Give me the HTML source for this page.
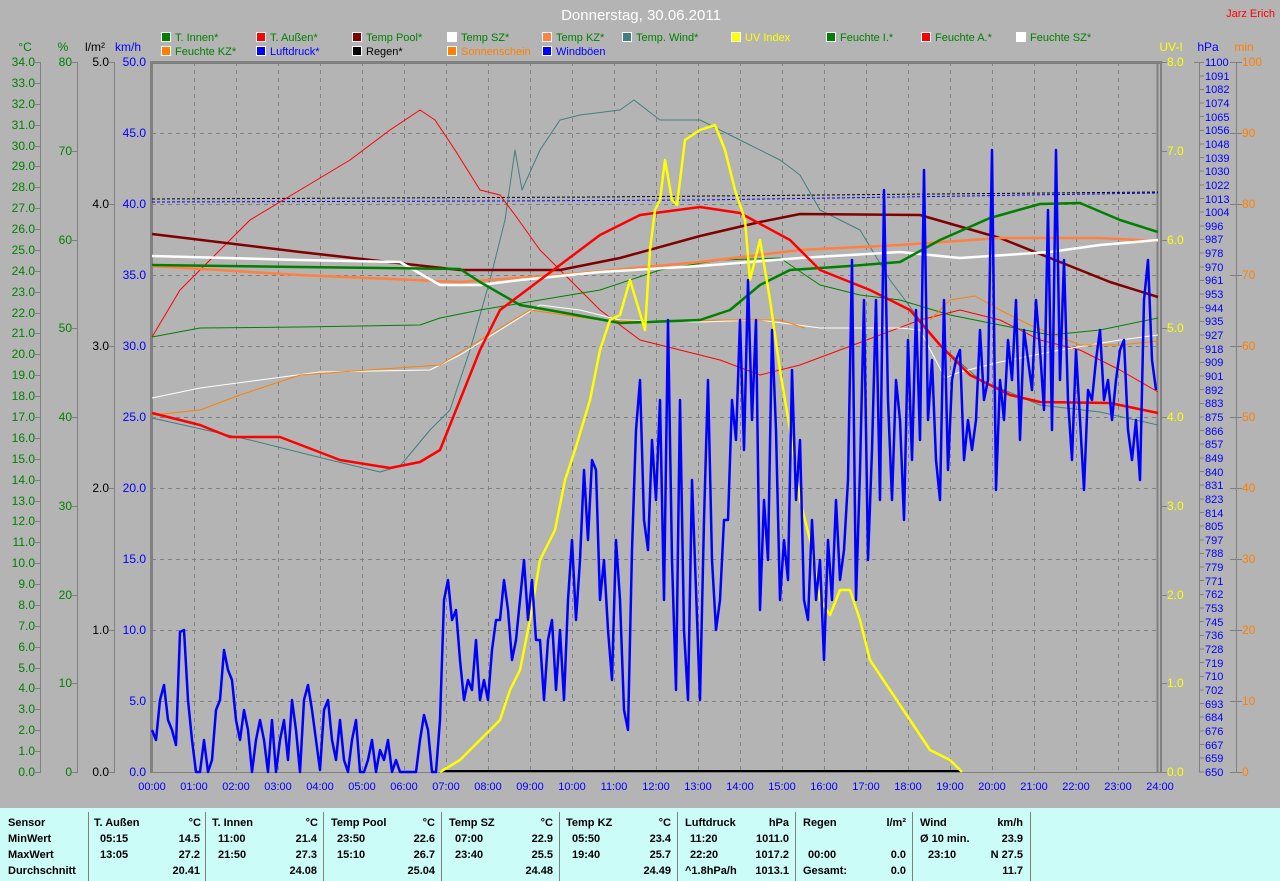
<!DOCTYPE html>
<html><head><meta charset="utf-8"><style>
html,body{margin:0;padding:0;background:#b4b4b4;width:1280px;height:881px;overflow:hidden}
svg{display:block;font-family:"Liberation Sans",sans-serif}
.tb{font-size:11px;font-weight:bold;fill:#000}
</style></head><body>
<svg width="1280" height="881" viewBox="0 0 1280 881" xmlns="http://www.w3.org/2000/svg">
<rect width="1280" height="881" fill="#b4b4b4"/>
<text x="641" y="20" font-size="15" fill="#fff" text-anchor="middle">Donnerstag, 30.06.2011</text>
<text x="1275" y="17" font-size="11" fill="#f00" text-anchor="end">Jarz Erich</text>
<!-- legend -->
<g font-size="11">
<g stroke="#fff" stroke-width="1">
<rect x="161.5" y="32.5" width="9" height="9" fill="#008000"/>
<rect x="256.5" y="32.5" width="9" height="9" fill="#f00"/>
<rect x="352.5" y="32.5" width="9" height="9" fill="#800000"/>
<rect x="447.5" y="32.5" width="9" height="9" fill="#fff"/>
<rect x="542.5" y="32.5" width="9" height="9" fill="#ff8040"/>
<rect x="622.5" y="32.5" width="9" height="9" fill="#408080"/>
<rect x="731.5" y="32.5" width="9" height="9" fill="#ff0"/>
<rect x="826.5" y="32.5" width="9" height="9" fill="#008000"/>
<rect x="921.5" y="32.5" width="9" height="9" fill="#f00"/>
<rect x="1016.5" y="32.5" width="9" height="9" fill="#fff"/>
<rect x="161.5" y="46.5" width="9" height="9" fill="#ff8000"/>
<rect x="256.5" y="46.5" width="9" height="9" fill="#00f"/>
<rect x="352.5" y="46.5" width="9" height="9" fill="#000"/>
<rect x="447.5" y="46.5" width="9" height="9" fill="#ff8000"/>
<rect x="542.5" y="46.5" width="9" height="9" fill="#00f"/>
</g>
<g fill="#008000">
<text x="175" y="41">T. Innen*</text><text x="270" y="41">T. Außen*</text><text x="366" y="41">Temp Pool*</text><text x="461" y="41">Temp SZ*</text><text x="556" y="41">Temp KZ*</text><text x="636" y="41">Temp. Wind*</text><text x="745" y="41" fill="#ff0">UV Index</text><text x="840" y="41">Feuchte I.*</text><text x="935" y="41">Feuchte A.*</text><text x="1030" y="41">Feuchte SZ*</text>
<text x="175" y="55">Feuchte KZ*</text><text x="270" y="55" fill="#00f">Luftdruck*</text><text x="366" y="55" fill="#000">Regen*</text><text x="461" y="55" fill="#ff8000">Sonnenschein</text><text x="556" y="55" fill="#00f">Windböen</text>
</g></g>
<!-- grid -->
<g stroke="#808080" stroke-width="1" stroke-dasharray="4,4">
<path d="M152 133.5H1158M152 204.5H1158M152 275.5H1158M152 346.5H1158M152 417.5H1158M152 488.5H1158M152 559.5H1158M152 630.5H1158M152 701.5H1158"/>
<path d="M194.5 62V772M236.5 62V772M278.5 62V772M320.5 62V772M362.5 62V772M404.5 62V772M446.5 62V772M488.5 62V772M530.5 62V772M572.5 62V772M614.5 62V772M656.5 62V772M698.5 62V772M740.5 62V772M782.5 62V772M824.5 62V772M866.5 62V772M908.5 62V772M950.5 62V772M992.5 62V772M1034.5 62V772M1076.5 62V772M1118.5 62V772"/>
</g>
<g stroke="#808080" fill="none">
<path d="M150 62.5H1162" stroke-width="3"/>
<path d="M151.5 61V773" stroke-width="3"/>
<path d="M1157.5 61V773M1161 61V773" stroke-width="2"/>
<path d="M152 772.5H1160" stroke-width="1"/>
<path d="M40.5 62V772M77.5 62V772M114.5 62V772M1199.5 62V772M1236.5 62V772"/>
</g>
<!-- axis titles -->
<g font-size="12" text-anchor="middle">
<text x="25" y="51" fill="#008000">°C</text><text x="63" y="51" fill="#008000">%</text><text x="95" y="51">l/m²</text><text x="128" y="51" fill="#00f">km/h</text>
<text x="1171" y="51" fill="#ff0">UV-I</text><text x="1208" y="51" fill="#00f">hPa</text><text x="1244" y="51" fill="#ff8000">min</text>
</g>
<!-- °C axis -->
<g font-size="12" fill="#008000" text-anchor="end">
<text x="35" y="66">34.0</text><text x="35" y="87">33.0</text><text x="35" y="108">32.0</text><text x="35" y="129">31.0</text><text x="35" y="150">30.0</text><text x="35" y="170">29.0</text><text x="35" y="191">28.0</text><text x="35" y="212">27.0</text><text x="35" y="233">26.0</text><text x="35" y="254">25.0</text><text x="35" y="275">24.0</text><text x="35" y="296">23.0</text><text x="35" y="317">22.0</text><text x="35" y="337">21.0</text><text x="35" y="358">20.0</text><text x="35" y="379">19.0</text><text x="35" y="400">18.0</text><text x="35" y="421">17.0</text><text x="35" y="442">16.0</text><text x="35" y="463">15.0</text><text x="35" y="484">14.0</text><text x="35" y="505">13.0</text><text x="35" y="525">12.0</text><text x="35" y="546">11.0</text><text x="35" y="567">10.0</text><text x="35" y="588">9.0</text><text x="35" y="609">8.0</text><text x="35" y="630">7.0</text><text x="35" y="651">6.0</text><text x="35" y="672">5.0</text><text x="35" y="692">4.0</text><text x="35" y="713">3.0</text><text x="35" y="734">2.0</text><text x="35" y="755">1.0</text><text x="35" y="776">0.0</text>
<text x="72" y="66">80</text><text x="72" y="155">70</text><text x="72" y="244">60</text><text x="72" y="332">50</text><text x="72" y="421">40</text><text x="72" y="510">30</text><text x="72" y="599">20</text><text x="72" y="687">10</text><text x="72" y="776">0</text>
</g>
<g font-size="12" fill="#000" text-anchor="end">
<text x="109" y="66">5.0</text><text x="109" y="208">4.0</text><text x="109" y="350">3.0</text><text x="109" y="492">2.0</text><text x="109" y="634">1.0</text><text x="109" y="776">0.0</text>
</g>
<g font-size="12" fill="#00f" text-anchor="end">
<text x="146" y="66">50.0</text><text x="146" y="137">45.0</text><text x="146" y="208">40.0</text><text x="146" y="279">35.0</text><text x="146" y="350">30.0</text><text x="146" y="421">25.0</text><text x="146" y="492">20.0</text><text x="146" y="563">15.0</text><text x="146" y="634">10.0</text><text x="146" y="705">5.0</text><text x="146" y="776">0.0</text>
</g>
<g stroke="#808080">
<path d="M35 62.5h6M35 83.5h6M35 104.5h6M35 125.5h6M35 146.5h6M35 166.5h6M35 187.5h6M35 208.5h6M35 229.5h6M35 250.5h6M35 271.5h6M35 292.5h6M35 313.5h6M35 333.5h6M35 354.5h6M35 375.5h6M35 396.5h6M35 417.5h6M35 438.5h6M35 459.5h6M35 480.5h6M35 501.5h6M35 521.5h6M35 542.5h6M35 563.5h6M35 584.5h6M35 605.5h6M35 626.5h6M35 647.5h6M35 668.5h6M35 688.5h6M35 709.5h6M35 730.5h6M35 751.5h6M35 772.5h6"/>
<path d="M72 62.5h6M72 151.5h6M72 240.5h6M72 328.5h6M72 417.5h6M72 506.5h6M72 595.5h6M72 683.5h6M72 772.5h6"/>
<path d="M109 62.5h6M109 204.5h6M109 346.5h6M109 488.5h6M109 630.5h6M109 772.5h6"/>
<path d="M1161 62.5h6M1161 151.5h6M1161 240.5h6M1161 328.5h6M1161 417.5h6M1161 506.5h6M1161 595.5h6M1161 683.5h6M1161 772.5h6"/>
<path d="M1230 62.5h12M1230 133.5h12M1230 204.5h12M1230 275.5h12M1230 346.5h12M1230 417.5h12M1230 488.5h12M1230 559.5h12M1230 630.5h12M1230 701.5h12M1230 772.5h12"/>
<path d="M1194 62.5h10M1199 76h5M1199 89.5h5M1199 103h5M1199 116.5h5M1199 130.5h5M1199 144h5M1199 157.5h5M1199 171h5M1199 185h5M1199 198.5h5M1199 212h5M1199 226h5M1199 239.5h5M1199 253h5M1199 267h5M1199 280.5h5M1199 294h5M1199 307.5h5M1199 321.5h5M1199 335h5M1199 348.5h5M1199 362.5h5M1199 376h5M1199 389.5h5M1199 403.5h5M1199 417h5M1199 430.5h5M1199 444h5M1199 458h5M1199 471.5h5M1199 485h5M1199 499h5M1199 512.5h5M1199 526h5M1199 540h5M1199 553.5h5M1199 567h5M1199 580.5h5M1199 594.5h5M1199 608h5M1199 621.5h5M1199 635.5h5M1199 649h5M1199 662.5h5M1199 676.5h5M1199 690h5M1199 703.5h5M1199 717h5M1199 731h5M1199 744.5h5M1199 758h5M1199 772h5"/>
</g>
<g font-size="12" fill="#ff0" text-anchor="start">
<text x="1167" y="66">8.0</text><text x="1167" y="155">7.0</text><text x="1167" y="244">6.0</text><text x="1167" y="332">5.0</text><text x="1167" y="421">4.0</text><text x="1167" y="510">3.0</text><text x="1167" y="599">2.0</text><text x="1167" y="687">1.0</text><text x="1167" y="776">0.0</text>
</g>
<g font-size="12" fill="#ff8000">
<text x="1242" y="66">100</text><text x="1242" y="137">90</text><text x="1242" y="208">80</text><text x="1242" y="279">70</text><text x="1242" y="350">60</text><text x="1242" y="421">50</text><text x="1242" y="492">40</text><text x="1242" y="563">30</text><text x="1242" y="634">20</text><text x="1242" y="705">10</text><text x="1242" y="776">0</text>
</g>
<g font-size="11" fill="#00f">
<text x="1205" y="66">1100</text><text x="1205" y="80">1091</text><text x="1205" y="93">1082</text><text x="1205" y="107">1074</text><text x="1205" y="121">1065</text><text x="1205" y="134">1056</text><text x="1205" y="148">1048</text><text x="1205" y="162">1039</text><text x="1205" y="175">1030</text><text x="1205" y="189">1022</text><text x="1205" y="203">1013</text><text x="1205" y="216">1004</text><text x="1205" y="230">996</text><text x="1205" y="243">987</text><text x="1205" y="257">978</text><text x="1205" y="271">970</text><text x="1205" y="284">961</text><text x="1205" y="298">953</text><text x="1205" y="312">944</text><text x="1205" y="325">935</text><text x="1205" y="339">927</text><text x="1205" y="353">918</text><text x="1205" y="366">909</text><text x="1205" y="380">901</text><text x="1205" y="394">892</text><text x="1205" y="407">883</text><text x="1205" y="421">875</text><text x="1205" y="435">866</text><text x="1205" y="448">857</text><text x="1205" y="462">849</text><text x="1205" y="476">840</text><text x="1205" y="489">831</text><text x="1205" y="503">823</text><text x="1205" y="517">814</text><text x="1205" y="530">805</text><text x="1205" y="544">797</text><text x="1205" y="557">788</text><text x="1205" y="571">779</text><text x="1205" y="585">771</text><text x="1205" y="598">762</text><text x="1205" y="612">753</text><text x="1205" y="626">745</text><text x="1205" y="639">736</text><text x="1205" y="653">728</text><text x="1205" y="667">719</text><text x="1205" y="680">710</text><text x="1205" y="694">702</text><text x="1205" y="708">693</text><text x="1205" y="721">684</text><text x="1205" y="735">676</text><text x="1205" y="749">667</text><text x="1205" y="762">659</text><text x="1205" y="776">650</text>
</g>
<!-- time labels -->
<g font-size="11" fill="#00f" text-anchor="middle">
<text x="152" y="790">00:00</text><text x="194" y="790">01:00</text><text x="236" y="790">02:00</text><text x="278" y="790">03:00</text><text x="320" y="790">04:00</text><text x="362" y="790">05:00</text><text x="404" y="790">06:00</text><text x="446" y="790">07:00</text><text x="488" y="790">08:00</text><text x="530" y="790">09:00</text><text x="572" y="790">10:00</text><text x="614" y="790">11:00</text><text x="656" y="790">12:00</text><text x="698" y="790">13:00</text><text x="740" y="790">14:00</text><text x="782" y="790">15:00</text><text x="824" y="790">16:00</text><text x="866" y="790">17:00</text><text x="908" y="790">18:00</text><text x="950" y="790">19:00</text><text x="992" y="790">20:00</text><text x="1034" y="790">21:00</text><text x="1076" y="790">22:00</text><text x="1118" y="790">23:00</text><text x="1160" y="790">24:00</text>
</g>
<!-- data -->
<g fill="none" stroke-linejoin="round">
<polyline stroke="#000" stroke-width="1" stroke-dasharray="3,2" points="152,199 600,197 1158,192"/>
<polyline stroke="#00f" stroke-width="1" stroke-dasharray="3,2" points="152,202 500,201 700,200 900,197 1158,193"/>
<polyline stroke="#408080" stroke-width="1" points="152,418 250,440 330,460 380,472 400,466 430,430 450,410 470,350 490,280 505,220 515,150 522,190 540,150 560,120 580,115 620,110 634,100 660,120 700,120 740,140 780,160 800,175 820,210 860,230 890,280 920,320 940,345 980,380 1040,405 1100,412 1158,425"/>
<polyline stroke="#f00" stroke-width="1" points="152,337 180,290 210,260 250,220 300,190 350,160 390,130 420,110 435,120 455,150 480,190 500,195 515,215 540,250 570,280 600,310 640,340 680,350 720,360 760,375 800,365 840,350 880,335 920,320 960,310 1000,320 1040,340 1080,350 1120,370 1158,392"/>
<polyline stroke="#008000" stroke-width="1" points="152,337 200,328 300,327 420,325 440,318 480,310 540,300 600,290 660,270 720,260 780,258 820,285 860,295 900,300 950,315 1000,325 1050,335 1100,330 1158,318"/>
<polyline stroke="#fff" stroke-width="1" points="152,398 200,388 260,380 320,372 430,370 460,355 500,330 540,305 580,310 620,320 700,322 760,320 820,328 900,328 920,330 945,378 960,372 1000,362 1060,350 1120,340 1158,335"/>
<polyline stroke="#ff8000" stroke-width="1" points="152,415 200,410 240,395 300,375 340,372 440,365 480,340 530,310 600,320 660,322 720,320 780,320 805,328"/>
<polyline stroke="#ff8000" stroke-width="1" points="930,320 950,300 975,296 1000,310 1030,325 1080,345 1120,345 1158,341"/>
<polyline stroke="#800000" stroke-width="2.5" points="152,234 300,252 460,270 560,270 620,258 700,236 760,222 800,214 920,215 1000,238 1060,262 1110,282 1158,297"/>
<polyline stroke="#ff8040" stroke-width="2.5" points="152,266 300,275 460,282 560,275 700,262 800,250 900,245 1000,238 1100,238 1158,241"/>
<polyline stroke="#fff" stroke-width="2.5" points="152,256 300,260 400,262 440,285 480,285 520,280 600,272 700,266 800,258 900,252 940,256 960,258 1050,252 1100,245 1158,240"/>
<polyline stroke="#008000" stroke-width="2.5" points="152,265 300,267 460,269 480,282 520,305 560,312 620,323 700,320 730,310 760,285 790,270 850,266 900,262 940,240 990,218 1040,204 1080,203 1120,220 1158,232"/>
<polyline stroke="#f00" stroke-width="2.5" points="152,413 200,425 230,437 280,437 340,460 390,468 420,462 440,450 460,400 480,350 500,310 540,280 600,235 640,215 700,207 740,213 790,240 820,270 870,290 910,310 940,345 970,375 1010,395 1040,402 1110,403 1158,413"/>
<polyline stroke="#000" stroke-width="2" points="440,771 962,771"/>
<polyline stroke="#ff0" stroke-width="2.5" points="440,772 460,760 480,740 500,720 510,690 520,670 530,620 540,560 555,530 565,480 575,450 590,400 600,350 610,320 620,315 630,280 645,330 650,250 655,210 660,200 665,160 672,200 677,205 685,140 700,130 715,125 725,150 735,190 745,220 750,280 760,240 770,300 780,370 790,430 800,500 810,540 820,600 830,615 840,590 850,590 860,620 870,660 890,690 910,720 930,750 950,760 962,772"/>
<polyline stroke="#00f" stroke-width="2.5" points="152,730 156,740 160,700 164,685 168,720 172,730 176,745 180,632 184,630 188,700 192,740 196,772 200,772 204,740 208,772 212,760 216,710 220,700 224,650 228,670 232,680 236,720 240,740 244,710 248,730 252,772 256,740 260,720 264,740 268,772 272,720 276,772 280,740 284,720 288,760 292,700 296,730 300,772 304,700 308,685 312,710 316,740 320,770 324,710 328,700 332,740 336,760 340,720 344,760 348,772 352,740 356,720 360,772 364,772 368,760 372,740 376,772 380,750 384,760 388,740 392,772 396,760 400,772 404,772 408,772 412,772 416,772 420,740 424,715 428,730 432,772 436,772 440,720 444,600 448,580 452,620 456,610 460,660 464,700 468,680 472,690 476,640 480,700 484,680 488,700 492,650 496,620 500,620 504,580 508,610 512,660 516,640 520,600 524,560 528,620 532,580 536,640 540,640 544,700 548,640 552,620 556,690 560,630 564,700 568,600 572,540 576,620 580,560 584,470 588,540 592,460 596,470 600,600 604,560 608,630 612,680 616,540 620,600 624,710 628,730 632,550 636,430 640,380 644,520 648,550 652,440 656,500 660,400 664,600 668,320 672,560 676,690 680,400 684,630 688,700 692,480 696,590 700,700 704,520 708,380 712,560 716,630 720,600 724,520 728,520 732,400 736,440 740,320 744,450 748,280 752,420 756,320 760,610 764,500 768,560 772,330 776,430 780,600 784,540 788,580 792,370 796,500 800,440 804,600 808,620 812,520 816,600 820,560 824,660 828,540 832,600 836,500 840,580 844,550 848,480 852,260 856,600 860,470 864,300 868,560 872,450 876,300 880,500 884,190 888,400 892,500 896,380 900,420 904,520 908,340 912,460 916,310 920,440 924,170 928,420 932,360 936,460 940,500 944,300 948,470 952,380 956,360 960,350 964,460 968,420 972,450 976,420 980,330 984,400 988,380 992,150 996,490 1000,380 1004,420 1008,340 1012,380 1016,300 1020,440 1024,330 1028,360 1032,390 1036,300 1040,350 1044,410 1048,210 1052,430 1056,150 1060,380 1064,260 1068,400 1072,460 1076,350 1080,420 1084,490 1088,390 1092,400 1096,360 1100,330 1104,400 1108,380 1112,420 1116,380 1120,350 1124,340 1128,430 1132,460 1136,420 1140,480 1144,300 1148,260 1152,360 1156,390"/>
</g>
<!-- table -->
<rect x="0" y="808" width="1280" height="73" fill="#ccfcf8"/>
<g stroke="#808080"><path d="M88.5 812V881M205.5 812V881M323.5 812V881M441.5 812V881M559.5 812V881M677.5 812V881M795.5 812V881M912.5 812V881M1030.5 812V881"/></g>
<g class="tb">
<text x="8" y="826">Sensor</text><text x="8" y="842">MinWert</text><text x="8" y="858">MaxWert</text><text x="8" y="874">Durchschnitt</text>
<text x="94" y="826">T. Außen</text><text x="201" y="826" text-anchor="end">°C</text>
<text x="212" y="826">T. Innen</text><text x="318" y="826" text-anchor="end">°C</text>
<text x="331" y="826">Temp Pool</text><text x="435" y="826" text-anchor="end">°C</text>
<text x="449" y="826">Temp SZ</text><text x="553" y="826" text-anchor="end">°C</text>
<text x="566" y="826">Temp KZ</text><text x="671" y="826" text-anchor="end">°C</text>
<text x="685" y="826">Luftdruck</text><text x="789" y="826" text-anchor="end">hPa</text>
<text x="803" y="826">Regen</text><text x="906" y="826" text-anchor="end">l/m²</text>
<text x="920" y="826">Wind</text><text x="1023" y="826" text-anchor="end">km/h</text>
</g>
<g class="tb" font-weight="normal">
<text x="100" y="842">05:15</text><text x="200" y="842" text-anchor="end">14.5</text>
<text x="218" y="842">11:00</text><text x="317" y="842" text-anchor="end">21.4</text>
<text x="337" y="842">23:50</text><text x="435" y="842" text-anchor="end">22.6</text>
<text x="455" y="842">07:00</text><text x="553" y="842" text-anchor="end">22.9</text>
<text x="572" y="842">05:50</text><text x="671" y="842" text-anchor="end">23.4</text>
<text x="690" y="842">11:20</text><text x="789" y="842" text-anchor="end">1011.0</text>
<text x="920" y="842">Ø 10 min.</text><text x="1023" y="842" text-anchor="end">23.9</text>
<text x="100" y="858">13:05</text><text x="200" y="858" text-anchor="end">27.2</text>
<text x="218" y="858">21:50</text><text x="317" y="858" text-anchor="end">27.3</text>
<text x="337" y="858">15:10</text><text x="435" y="858" text-anchor="end">26.7</text>
<text x="455" y="858">23:40</text><text x="553" y="858" text-anchor="end">25.5</text>
<text x="572" y="858">19:40</text><text x="671" y="858" text-anchor="end">25.7</text>
<text x="690" y="858">22:20</text><text x="789" y="858" text-anchor="end">1017.2</text>
<text x="808" y="858">00:00</text><text x="906" y="858" text-anchor="end">0.0</text>
<text x="928" y="858">23:10</text><text x="1023" y="858" text-anchor="end">N 27.5</text>
<text x="200" y="874" text-anchor="end">20.41</text>
<text x="317" y="874" text-anchor="end">24.08</text>
<text x="435" y="874" text-anchor="end">25.04</text>
<text x="553" y="874" text-anchor="end">24.48</text>
<text x="671" y="874" text-anchor="end">24.49</text>
<text x="685" y="874">^1.8hPa/h</text><text x="789" y="874" text-anchor="end">1013.1</text>
<text x="803" y="874">Gesamt:</text><text x="906" y="874" text-anchor="end">0.0</text>
<text x="1023" y="874" text-anchor="end">11.7</text>
</g>
</svg>
</body></html>
